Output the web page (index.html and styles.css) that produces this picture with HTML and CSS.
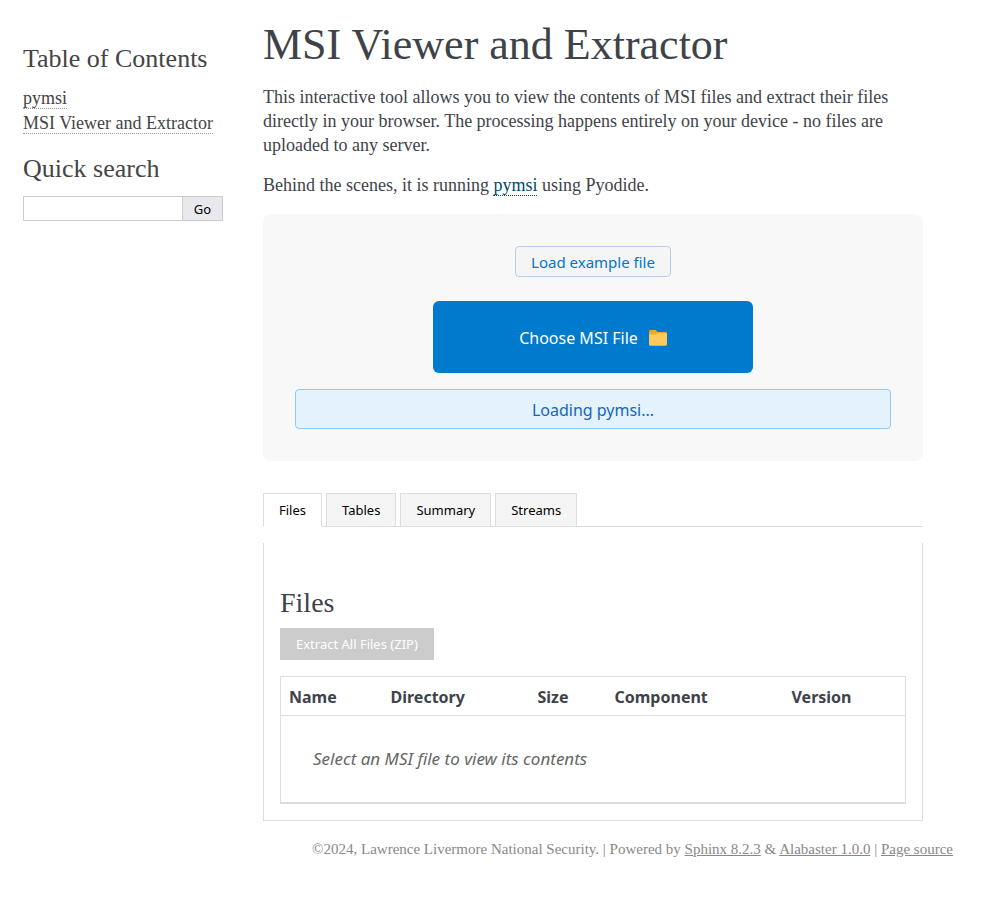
FILE: index.html
```html
<!DOCTYPE html>
<html lang="en">

<head>
  <meta charset="UTF-8">
  <meta name="viewport" content="width=device-width, initial-scale=1.0">
  <title>MSI Viewer and Extractor</title>
  <link rel="stylesheet" href="styles.css">
</head>

<body>
  <div class="document">
    <nav class="sidebar">
      <h3>Table of Contents</h3>
      <ul>
        <li><a href="#">pymsi</a></li>
        <li><a href="#">MSI Viewer and Extractor</a></li>
      </ul>
      <h3><label for="search">Quick search</label></h3>
      <form class="search" role="search">
        <input type="text" id="search" name="q">
        <button type="submit">Go</button>
      </form>
    </nav>

    <main class="body">
      <h1>MSI Viewer and Extractor</h1>
      <p>This interactive tool allows you to view the contents of MSI files and extract their files directly in your browser. The processing happens entirely on your device - no files are uploaded to any server.</p>
      <p>Behind the scenes, it is running <a href="#">pymsi</a> using Pyodide.</p>

      <div class="picker">
        <button type="button" class="example-button">Load example file</button>
        <button type="button" class="file-button">
          Choose MSI File
          <svg width="18" height="16" viewBox="0 0 18 16" aria-hidden="true">
            <path d="M0 1.5Q0 0 1.5 0H6.5L8.5 2H16.5Q18 2 18 3.5V14.5Q18 16 16.5 16H1.5Q0 16 0 14.5Z" fill="#f0a92e" />
            <path d="M0 4.500H7L9 3H16.5Q18 3 18 4.5V13.5Q18 15 16.5 15H1.5Q0 15 0 13.5Z" fill="#ffc95c" />
          </svg>
        </button>
        <div class="status">Loading pymsi...</div>
      </div>

      <div class="tabs" role="tablist">
        <button type="button" role="tab" class="tab active" aria-selected="true">Files</button>
        <button type="button" role="tab" class="tab">Tables</button>
        <button type="button" role="tab" class="tab">Summary</button>
        <button type="button" role="tab" class="tab">Streams</button>
      </div>

      <section class="tab-content">
        <h2>Files</h2>
        <button type="button" class="extract-button" disabled>Extract All Files (ZIP)</button>
        <table>
          <thead>
            <tr>
              <th class="col-name">Name</th>
              <th class="col-directory">Directory</th>
              <th class="col-size">Size</th>
              <th class="col-component">Component</th>
              <th>Version</th>
            </tr>
          </thead>
          <tbody>
            <tr>
              <td colspan="5" class="empty">Select an MSI file to view its contents</td>
            </tr>
          </tbody>
        </table>
      </section>
    </main>
  </div>

  <footer class="footer">
    &copy;2024, Lawrence Livermore National Security. | Powered by <a href="#">Sphinx 8.2.3</a> &amp; <a href="#">Alabaster 1.0.0</a> | <a href="#">Page source</a>
  </footer>
</body>

</html>
```

FILE: styles.css
```css
* {
  box-sizing: border-box;
}

body {
  margin: 0;
  padding: 0 23px;
  background-color: #fff;
  color: #3e4349;
  font-family: Georgia, "Liberation Serif", serif;
  font-size: 18px;
  line-height: 24px;
}

h1,
h2,
h3 {
  margin: 0;
  font-weight: normal;
}

button,
input {
  font-family: "Noto Sans", sans-serif;
  font-size: 13px;
}

button {
  cursor: pointer;
}

.document {
  display: flex;
  gap: 40px;
  max-width: 940px;
  margin: 20px auto 0;
}

/* Sidebar */
.sidebar {
  flex: 0 0 200px;
  min-width: 0;
  padding-top: 24px;
}

.sidebar h3 {
  color: #444;
  font-size: 26px;
  line-height: 30px;
}

.sidebar ul {
  margin: 12px 0 18px;
  padding: 0;
  list-style: none;
}

.sidebar li {
  line-height: 25px;
}

.sidebar a {
  color: #444;
  text-decoration: none;
  border-bottom: 1px dotted #999;
}

.search {
  display: flex;
  margin-top: 12px;
}

.search input {
  flex: 1;
  min-width: 0;
  height: 25px;
  border: 1px solid #ccc;
}

.search button {
  width: 41px;
  height: 25px;
  margin-left: -1px;
  padding: 0;
  background-color: #e9e9ed;
  border: 1px solid #ccc;
}

/* Main content */
.body {
  flex: 1;
  min-width: 0;
  padding-right: 40px;
}

.body h1 {
  margin-bottom: 15px;
  font-size: 44px;
  line-height: 50px;
}

.body p {
  margin: 0 0 16px;
}

.body p a {
  color: #004b6b;
  text-decoration: none;
  border-bottom: 1px dotted #004b6b;
}

.picker {
  display: flex;
  flex-direction: column;
  align-items: center;
  margin: 17px 0 32px;
  padding: 32px;
  background-color: #f8f8f8;
  border-radius: 8px;
  font-family: "Noto Sans", sans-serif;
}

.example-button {
  margin-bottom: 24px;
  padding: 3px 15px 1px;
  background-color: #f5f5f5;
  border: 1px solid #b3d1ec;
  border-radius: 4px;
  color: #0077cc;
  font-size: 15px;
  line-height: 25px;
}

.file-button {
  display: flex;
  justify-content: center;
  align-items: center;
  gap: 11px;
  width: 320px;
  max-width: 100%;
  height: 72px;
  margin-bottom: 16px;
  padding-top: 3px;
  background-color: #007acc;
  border: none;
  border-radius: 6px;
  color: #fff;
  font-size: 16px;
}

.status {
  width: 100%;
  padding: 8px 8px 6px;
  background-color: #e3f2fd;
  border: 1px solid #90caf9;
  border-radius: 4px;
  color: #1565c0;
  font-size: 16px;
  text-align: center;
}

/* Tabs */
.tabs {
  display: flex;
  gap: 4px;
  margin-bottom: 16px;
  border-bottom: 1px solid #ddd;
}

.tab {
  height: 34px;
  margin-bottom: -1px;
  padding: 0 15px;
  background-color: #f5f5f5;
  border: 1px solid #ddd;
  color: #000;
}

.tab.active {
  background-color: #fff;
  border-bottom-color: #fff;
}

.tab-content {
  padding: 44px 16px 16px;
  border: 1px solid #ddd;
  border-top: none;
}

.tab-content h2 {
  margin-bottom: 9px;
  font-size: 28px;
  line-height: 32px;
}

.extract-button {
  height: 32px;
  margin-bottom: 16px;
  padding: 0 16px;
  background-color: #ccc;
  border: none;
  color: #fff;
  cursor: not-allowed;
}

table {
  width: 100%;
  border: 1px solid #ddd;
  border-collapse: collapse;
  font-family: "Noto Sans", sans-serif;
  font-size: 16px;
}

th {
  padding: 8px 8px 6px;
  border-bottom: 1px solid #ddd;
  text-align: left;
}

.col-name {
  width: 102px;
}

.col-directory {
  width: 147px;
}

.col-size {
  width: 77px;
}

.col-component {
  width: 177px;
}

.empty {
  padding: 31px 32px;
  border-bottom: 2px solid #ddd;
  color: #666;
  font-size: 17px;
  font-style: italic;
}

.footer {
  max-width: 940px;
  margin: 16px auto 30px;
  padding-right: 10px;
  color: #888;
  font-size: 15px;
  text-align: right;
}

.footer a {
  color: #888;
}
```
